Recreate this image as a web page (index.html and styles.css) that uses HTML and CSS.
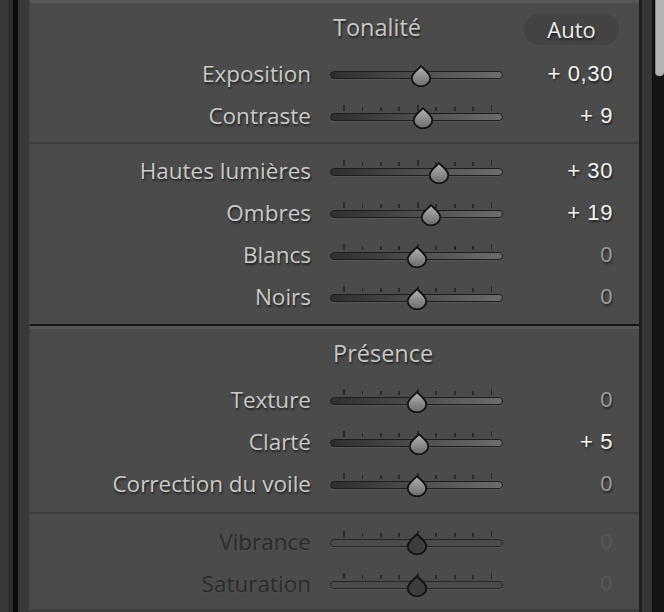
FILE: index.html
```html
<!DOCTYPE html>
<html lang="fr">
<head>
<meta charset="utf-8">
<title>Réglages de base</title>
<link rel="stylesheet" href="styles.css">
</head>
<body>
<svg class="defs" width="0" height="0" aria-hidden="true">
  <defs>
    <linearGradient id="thumbFill" x1="0" y1="0" x2="0" y2="1">
      <stop offset="0" stop-color="#b4b4b4"/>
      <stop offset="1" stop-color="#6a6a6a"/>
    </linearGradient>
    <symbol id="thumb" viewBox="0 0 22 22">
      <path d="M11 1.2 C13.6 4 20.3 8.4 20.3 13.1 A9.3 8.2 0 0 1 1.7 13.1 C1.7 8.4 8.4 4 11 1.2 Z"/>
    </symbol>
  </defs>
</svg>
<div class="app">
  <div class="gutter-left"></div>
  <main class="panel">
    <section class="section first">
      <div class="sec-head">
        <span class="title">Tonalité</span>
        <span class="auto">Auto</span>
      </div>
      <div class="group pad-a">
        <div class="row">
          <span class="label">Exposition</span>
          <div class="slider no-ticks"><div class="ticks"></div><div class="track"></div><svg class="thumb" style="--pos:4" viewBox="0 0 22 22"><use href="#thumb"/></svg></div>
          <span class="value on">+ 0,30</span>
        </div>
        <div class="row">
          <span class="label">Contraste</span>
          <div class="slider"><div class="ticks"></div><div class="track"></div><svg class="thumb" style="--pos:6" viewBox="0 0 22 22"><use href="#thumb"/></svg></div>
          <span class="value on">+ 9</span>
        </div>
      </div>
      <div class="group pad-b">
        <div class="row">
          <span class="label">Hautes lumières</span>
          <div class="slider"><div class="ticks"></div><div class="track"></div><svg class="thumb" style="--pos:22" viewBox="0 0 22 22"><use href="#thumb"/></svg></div>
          <span class="value on">+ 30</span>
        </div>
        <div class="row">
          <span class="label">Ombres</span>
          <div class="slider"><div class="ticks"></div><div class="track"></div><svg class="thumb" style="--pos:14" viewBox="0 0 22 22"><use href="#thumb"/></svg></div>
          <span class="value on">+ 19</span>
        </div>
        <div class="row">
          <span class="label">Blancs</span>
          <div class="slider"><div class="ticks"></div><div class="track"></div><svg class="thumb" style="--pos:0" viewBox="0 0 22 22"><use href="#thumb"/></svg></div>
          <span class="value">0</span>
        </div>
        <div class="row">
          <span class="label">Noirs</span>
          <div class="slider"><div class="ticks"></div><div class="track"></div><svg class="thumb" style="--pos:0" viewBox="0 0 22 22"><use href="#thumb"/></svg></div>
          <span class="value">0</span>
        </div>
      </div>
    </section>
    <section class="section second">
      <div class="sec-head">
        <span class="title">Présence</span>
      </div>
      <div class="group pad-c">
        <div class="row">
          <span class="label">Texture</span>
          <div class="slider"><div class="ticks"></div><div class="track"></div><svg class="thumb" style="--pos:0" viewBox="0 0 22 22"><use href="#thumb"/></svg></div>
          <span class="value">0</span>
        </div>
        <div class="row">
          <span class="label">Clarté</span>
          <div class="slider"><div class="ticks"></div><div class="track"></div><svg class="thumb" style="--pos:2.5" viewBox="0 0 22 22"><use href="#thumb"/></svg></div>
          <span class="value on">+ 5</span>
        </div>
        <div class="row">
          <span class="label">Correction du voile</span>
          <div class="slider"><div class="ticks"></div><div class="track"></div><svg class="thumb" style="--pos:0" viewBox="0 0 22 22"><use href="#thumb"/></svg></div>
          <span class="value">0</span>
        </div>
      </div>
      <div class="group pad-d disabled">
        <div class="row">
          <span class="label">Vibrance</span>
          <div class="slider"><div class="ticks"></div><div class="track"></div><svg class="thumb" style="--pos:0" viewBox="0 0 22 22"><use href="#thumb"/></svg></div>
          <span class="value">0</span>
        </div>
        <div class="row">
          <span class="label">Saturation</span>
          <div class="slider"><div class="ticks"></div><div class="track"></div><svg class="thumb" style="--pos:0" viewBox="0 0 22 22"><use href="#thumb"/></svg></div>
          <span class="value">0</span>
        </div>
      </div>
    </section>
  </main>
  <div class="gutter-right">
    <div class="scroll-track"><div class="scroll-thumb"></div></div>
  </div>
</div>
</body>
</html>
```
FILE: styles.css
```css
html, body {
  margin: 0;
  padding: 0;
  background: #363636;
}
.defs {
  position: absolute;
  width: 0;
  height: 0;
  overflow: hidden;
}
.app {
  display: flex;
  width: 664px;
  height: 612px;
  overflow: hidden;
}
.gutter-left {
  width: 30px;
  flex: none;
  background: linear-gradient(to right,
    #383838 0 8px,
    #2f2f2f 8px 13px,
    #0b0b0b 13px 18px,
    #393939 18px 29px,
    #444444 29px 30px);
}
.panel {
  width: 609px;
  flex: none;
  background: #4b4b4b;
  font-family: "Open Sans", "DejaVu Sans", sans-serif;
}
.section {
  border-top: 3px solid #575757;
}
.section.first {
  border-bottom: 2px solid #151515;
}
.section.second {
  border-bottom: 3px solid #3f3f3f;
}
.sec-head {
  height: 50px;
  display: flex;
  align-items: center;
  padding-left: 303px;
  padding-right: 20px;
}
.title {
  font-size: 23.5px;
  color: #c6c6c6;
  margin-bottom: 2px;
  text-shadow: 1px 2px 2px rgba(0, 0, 0, 0.55);
}
.auto {
  margin-left: auto;
  width: 95px;
  height: 31px;
  border-radius: 16px;
  background: #434343;
  color: #ececec;
  font-size: 22px;
  display: flex;
  align-items: center;
  justify-content: center;
  margin-top: 2px;
  text-shadow: 1px 2px 2px rgba(0, 0, 0, 0.5);
}
.group + .group {
  border-top: 2px solid #3e3e3e;
}
.pad-a { padding: 0 0 5px; }
.pad-b { padding: 6px 0 6px; }
.pad-c { padding: 0 0 7px; }
.pad-d { padding: 7px 0 4px; }
.row {
  display: grid;
  grid-template-columns: 281px 173px 1fr;
  column-gap: 19px;
  height: 42px;
  align-items: center;
  padding-right: 26px;
}
.label {
  text-align: right;
  font-size: 22.5px;
  color: #c9c9c9;
  white-space: nowrap;
  margin-bottom: 2px;
  text-shadow: 1px 2px 2px rgba(0, 0, 0, 0.55);
}
.value {
  text-align: right;
  font-family: "Liberation Sans", Arial, sans-serif;
  font-size: 22px;
  letter-spacing: 0.6px;
  color: #9c9c9c;
  text-shadow: 1px 2px 2px rgba(0, 0, 0, 0.55);
}
.value.on {
  color: #f4f4f4;
}
.slider {
  position: relative;
  height: 42px;
  box-sizing: border-box;
  padding-top: 10px;
}
.ticks {
  height: 6px;
  width: 150px;
  margin: 0 0 2px 12.5px;
  background:
    repeating-linear-gradient(to right, #2a2a2a 0 1.5px, transparent 1.5px 74px) 0 0 / 100% 6px no-repeat,
    repeating-linear-gradient(to right, #2a2a2a 0 1.5px, transparent 1.5px 18.5px) 0 100% / 100% 4.5px no-repeat;
}
.no-ticks .ticks {
  background: none;
}
.track {
  height: 8px;
  box-sizing: border-box;
  border: 1.5px solid #1e1e1e;
  border-radius: 4px;
  background: linear-gradient(to right, #2f2f2f, #4a4a4a 45%, #6c6c6c);
  box-shadow: 0 1px 0 rgba(255, 255, 255, 0.06);
}
.thumb {
  position: absolute;
  top: 12px;
  left: calc(86.7px + var(--pos) * 1px - 11px);
  width: 22px;
  height: 22px;
  fill: url(#thumbFill);
  stroke: #111111;
  stroke-width: 1.8;
  overflow: visible;
}
.disabled .label {
  color: #2b2b2b;
  text-shadow: 1px 1px 1px rgba(255, 255, 255, 0.04);
}
.disabled .value {
  color: #575757;
  text-shadow: none;
}
.disabled .track {
  background: #4b4b4b;
  border-color: #262626;
}
.disabled .thumb {
  fill: #3d3d3d;
}
.gutter-right {
  flex: 1;
  display: flex;
  background: linear-gradient(to right,
    #1f1f1f 0 3px,
    #363636 3px 13px,
    #121212 13px 16px);
}
.scroll-track {
  margin-left: 16px;
  flex: 1;
  background: #141414;
}
.scroll-thumb {
  height: 76px;
  background: #b3b3b3;
  border-left: 1px solid #8a8a8a;
  border-radius: 0 0 4px 4px;
}
```
